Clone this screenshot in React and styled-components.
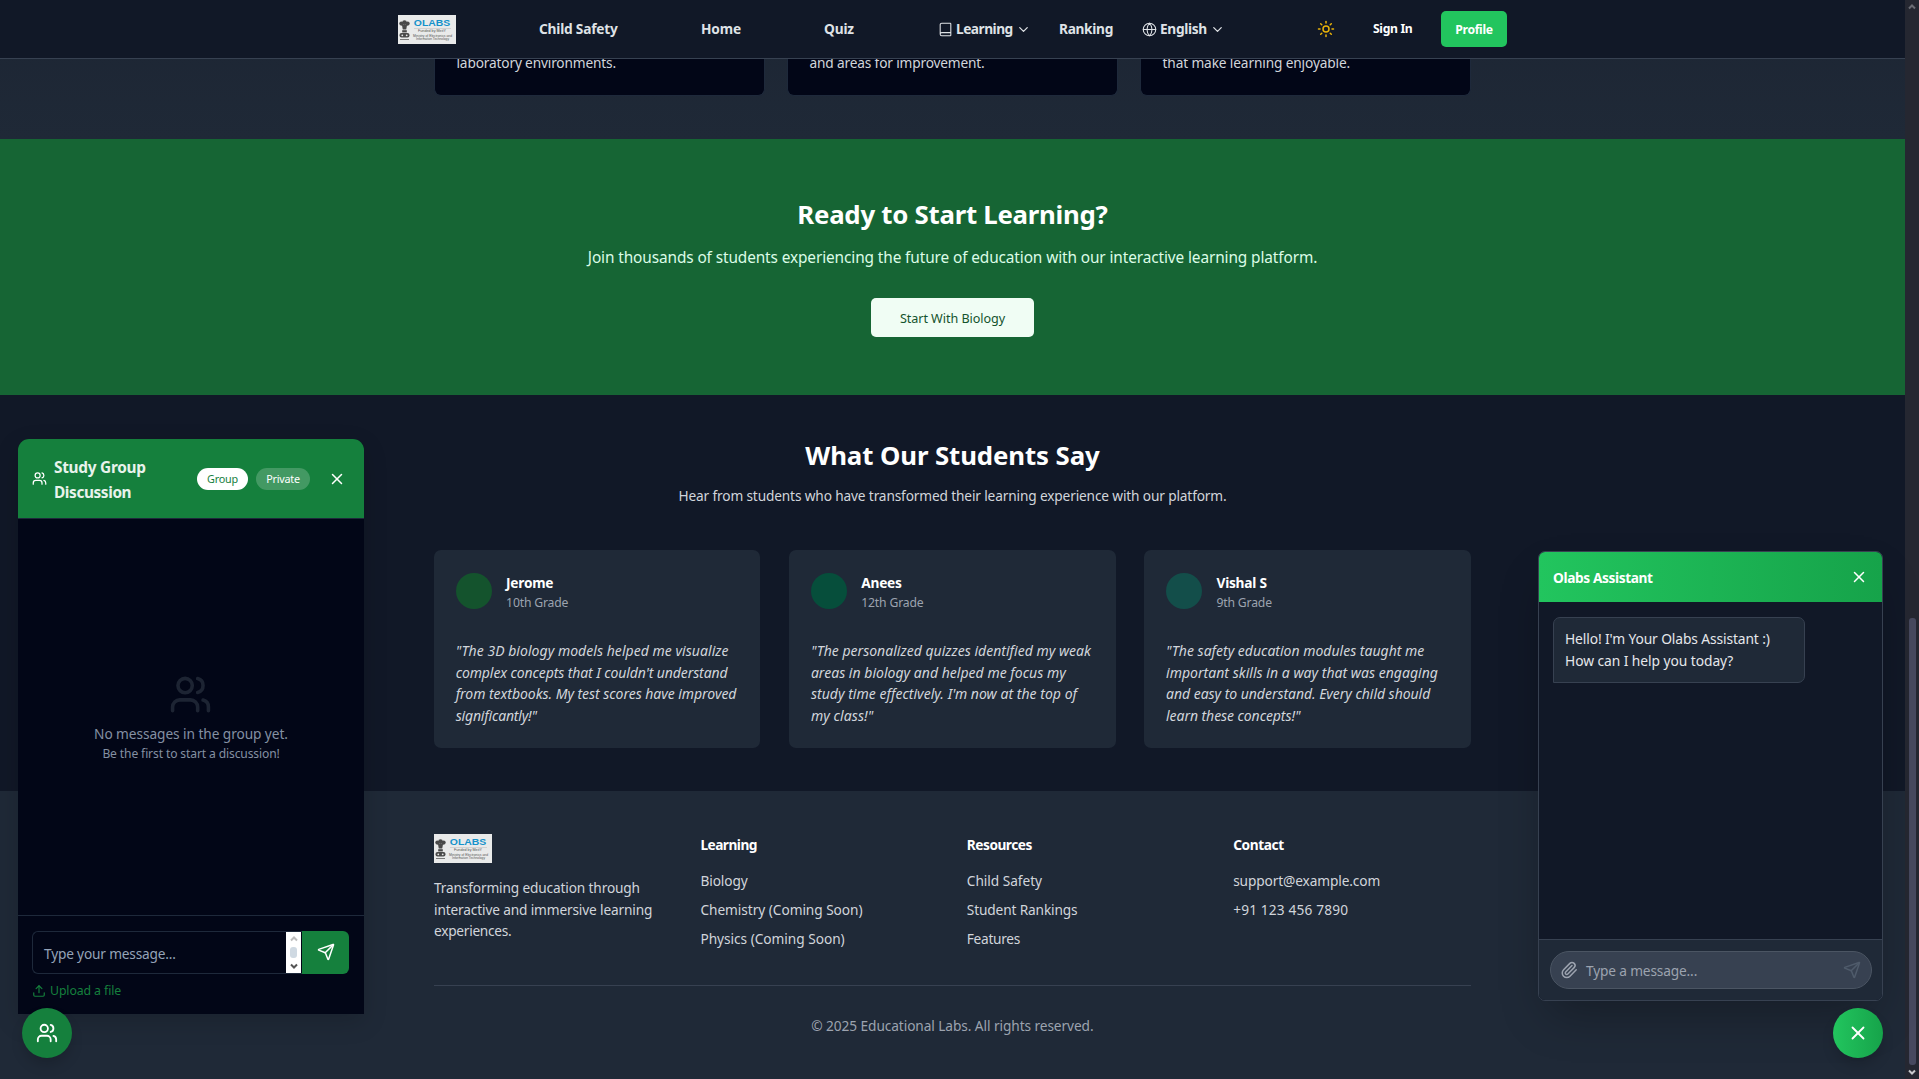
import React from "react";
import styled, { createGlobalStyle } from "styled-components";
import { Users, X, Send, Upload, Paperclip, Sun, Globe, ChevronDown } from "lucide-react";

const Global = createGlobalStyle`
  * { box-sizing: border-box; margin: 0; padding: 0; }
  html { font-size: 14.4px; }
  body { background: #111827; font-family: "Noto Sans", "Open Sans", sans-serif; overflow: hidden; }
  button { border: 0; font: inherit; color: inherit; background: none; }
`;

const Shell = styled.div`
  display: grid;
  grid-template-columns: 1fr 14px;
  height: 1079px;
  width: 1919px;
  position: relative;
  color: #d1d5db;
`;
const Page = styled.div`
  display: flex;
  flex-direction: column;
  overflow: hidden;
`;
const T = styled.span`
  display: block;
  white-space: nowrap;
  letter-spacing: ${(p) => p.$ls || 0}px;
`;

/* header */
const Header = styled.header`
  height: 59px;
  flex: none;
  position: relative;
  z-index: 1;
  background: #111827;
  border-bottom: 1px solid #374151;
  display: flex;
  align-items: center;
  padding-left: 398px;
`;
const NavItem = styled.div`
  width: ${(p) => p.$w}px;
  flex: none;
  display: flex;
  align-items: center;
  gap: 3px;
  font-size: ${(p) => p.$size || 13.7}px;
  line-height: 20px;
  font-weight: 700;
  color: ${(p) => p.$color || "#dfe2e6"};
`;
const ProfileButton = styled.button`
  width: 66px;
  height: 36px;
  border-radius: 5px;
  background: #22c55e;
  color: #fff;
  font-size: 12.2px;
  font-weight: 700;
  display: flex;
  align-items: center;
  justify-content: center;
`;

/* features */
const Features = styled.section`
  height: 110px;
  margin-top: -30px;
  flex: none;
  background: linear-gradient(#1d2634, #1f2937);
  display: flex;
  justify-content: center;
  gap: 22px;
`;
const FeatureCard = styled.div`
  width: 331px;
  height: 67px;
  border: 1px solid #1e293b;
  border-top: 0;
  border-radius: 0 0 7px 7px;
  background: #020617;
  padding: 23px 21.500px 0;
  font-size: 13.7px;
  line-height: 21.6px;
`;

/* call to action */
const Cta = styled.section`
  height: 256px;
  flex: none;
  background: #166534;
  display: flex;
  flex-direction: column;
  align-items: center;
  padding-top: 57px;
`;
const Heading = styled.h2`
  font-size: 25.800px;
  line-height: 36px;
  font-weight: 700;
  color: #fff;
`;
const Lead = styled.p`
  margin-top: ${(p) => p.$mt}px;
  font-size: ${(p) => p.$size}px;
  line-height: 24px;
  color: ${(p) => p.$color};
`;
const CtaButton = styled.button`
  margin-top: 28px;
  width: 163px;
  height: 39px;
  padding-top: 1px;
  border-radius: 5px;
  background: #f0fdf4;
  color: #14532d;
  font-size: 12.6px;
  display: flex;
  align-items: center;
  justify-content: center;
`;

/* testimonials */
const Stories = styled.section`
  height: 396px;
  flex: none;
  background: #111827;
  display: flex;
  flex-direction: column;
  align-items: center;
  padding-top: 42px;
`;
const Cards = styled.div`
  margin-top: 42px;
  width: 1036.8px;
  display: grid;
  grid-template-columns: repeat(3, minmax(0, 1fr));
  gap: 28.8px;
`;
const Card = styled.article`
  height: 198px;
  background: #1f2937;
  border-radius: 7px;
  padding: 22px 21.600px;
`;
const Person = styled.div`
  display: flex;
  align-items: center;
  gap: 14.4px;
  height: 38px;
`;
const Avatar = styled.div`
  width: 36px;
  height: 36px;
  border-radius: 50%;
  background: ${(p) => p.$color};
`;
const Name = styled.div`
  padding-top: 2px;
  font-size: 13.7px;
  line-height: 21px;
  font-weight: 700;
  color: #fff;
`;
const Grade = styled.div`
  font-size: 12.2px;
  line-height: 20px;
  color: #9ca3af;
`;
const Quote = styled.div`
  margin-top: 30px;
  font-size: 14px;
  line-height: 21.6px;
  font-style: italic;
`;

/* footer */
const Footer = styled.footer`
  flex: 1;
  background: #1f2937;
  padding: 43px 0 0 434px;
`;
const Columns = styled.div`
  width: 1036.8px;
  height: 152px;
  display: grid;
  grid-template-columns: repeat(4, minmax(0, 1fr));
  gap: 28.8px;
  border-bottom: 1px solid #374151;
`;
const FooterHead = styled.h3`
  font-size: 13.7px;
  line-height: 22px;
  font-weight: 700;
  color: #fff;
  margin-bottom: 14px;
`;
const FooterLink = styled.a`
  display: block;
  font-size: 13.7px;
  line-height: 22px;
  margin-bottom: 7px;
`;
const Blurb = styled.div`
  margin-top: 14px;
  font-size: 13.7px;
  line-height: 21.6px;
`;
const Copyright = styled.div`
  width: 1036.8px;
  margin-top: 29px;
  display: flex;
  justify-content: center;
  font-size: 13.7px;
  line-height: 22px;
  color: #9ca3af;
`;

/* scrollbar */
const Track = styled.div`
  background: #252731;
  display: flex;
  flex-direction: column;
  align-items: center;
`;
const Arrow = styled.svg`
  width: 8px;
  height: 6px;
  flex: none;
  margin-top: ${(p) => p.$mt || 0}px;
`;
const Thumb = styled.div`
  width: 7px;
  height: 447px;
  margin: 608px 0 4px;
  border-radius: 3px;
  background: #47495f;
`;

/* study group window */
const GroupPanel = styled.aside`
  position: absolute;
  left: 18px;
  top: 439px;
  width: 346px;
  height: 575px;
  border-radius: 11px 11px 0 0;
  background: #020617;
  box-shadow: 0 8px 24px rgba(0, 0, 0, 0.15);
  display: flex;
  flex-direction: column;
  overflow: hidden;
`;
const GroupHeader = styled.div`
  height: 80px;
  flex: none;
  background: #15803d;
  border-bottom: 1px solid #1e293b;
  color: #fff;
  display: flex;
  align-items: center;
  padding: 0 18px 0 14px;
`;
const GroupTitle = styled.div`
  width: 143px;
  margin-left: 7px;
  padding-top: 3px;
  font-size: 15.4px;
  line-height: 25px;
  font-weight: 700;
  color: #e8f3ec;
`;
const Pill = styled.button`
  width: ${(p) => p.$w}px;
  height: 22px;
  margin-right: 8px;
  border-radius: 11px;
  background: ${(p) => (p.$active ? "#fff" : "rgba(255,255,255,0.2)")};
  color: ${(p) => (p.$active ? "#15803d" : "#fff")};
  font-size: 10.8px;
  display: flex;
  justify-content: center;
  align-items: center;
`;
const Spacer = styled.div`
  flex: 1;
`;
const GroupBody = styled.div`
  flex: 1;
  display: flex;
  flex-direction: column;
  align-items: center;
  padding: 154px 0 0 0;
  color: #8490a3;
  svg { margin-right: 1px; }
`;
const EmptyTitle = styled.div`
  margin-top: 7px;
  font-size: 13.7px;
  line-height: 22px;
`;
const EmptyNote = styled.div`
  margin-top: 1px;
  font-size: 12.1px;
  line-height: 16px;
`;
const GroupFooter = styled.div`
  height: 99px;
  flex: none;
  border-top: 1px solid #1e293b;
  padding: 15px 15px 0 14px;
`;
const MessageRow = styled.div`
  display: flex;
  height: 43px;
`;
const MessageBox = styled.div`
  flex: 1;
  border: 1px solid #1e293b;
  border-right: 0;
  border-radius: 6px 0 0 6px;
  display: flex;
  justify-content: space-between;
  font-size: 13.7px;
  line-height: 43px;
  color: #94a3b8;
  padding-left: 11px;
`;
const MiniScroll = styled.div`
  width: 15px;
  margin-right: 1px;
  background: #fff;
  display: flex;
  flex-direction: column;
  align-items: center;
  justify-content: space-between;
  padding: 4px 0;
`;
const MiniThumb = styled.div`
  width: 7px;
  height: 11px;
  border-radius: 3px;
  background: #cfd9e2;
`;
const SendButton = styled.button`
  width: 47px;
  background: #15803d;
  border-radius: 0 6px 6px 0;
  padding-bottom: 1px;
  color: #fff;
  display: flex;
  align-items: center;
  justify-content: center;
`;
const UploadLink = styled.div`
  margin-top: 7px;
  display: flex;
  align-items: center;
  gap: 4px;
  font-size: 12.3px;
  line-height: 20px;
  color: #15803d;
`;

/* assistant window */
const BotPanel = styled.aside`
  position: absolute;
  left: 1538px;
  top: 551px;
  width: 345px;
  height: 450px;
  border: 1px solid #374151;
  border-radius: 7px;
  background: #111827;
  box-shadow: 0 22px 45px -11px rgba(0, 0, 0, 0.3);
  display: flex;
  flex-direction: column;
  overflow: hidden;
`;
const BotHeader = styled.div`
  height: 50px;
  flex: none;
  display: flex;
  align-items: center;
  justify-content: space-between;
  padding: 0 14px;
  background: linear-gradient(to right, #22c55e, #16a34a);
  color: #fff;
  font-size: 13.7px;
  font-weight: 700;
`;
const BotBody = styled.div`
  flex: 1;
  padding: 15px 14px;
`;
const Bubble = styled.div`
  width: 252px;
  height: 66px;
  border: 1px solid #374151;
  border-radius: 7px 7px 7px 0;
  background: #1f2937;
  color: #e5e7eb;
  padding: 10px 11px;
  font-size: 13.8px;
  line-height: 21.6px;
`;
const BotFooter = styled.div`
  height: 61px;
  flex: none;
  border-top: 1px solid #374151;
  background: #1f2937;
  padding: 11px 10px 0 11px;
`;
const BotInput = styled.div`
  height: 38px;
  border: 1px solid #4b5563;
  border-radius: 19px;
  background: #374151;
  display: flex;
  align-items: center;
  padding: 0 10px 0 9px;
  color: #9ca3af;
  font-size: 13.7px;
  ${T} { margin-left: 8px; flex: 1; }
`;
const Fab = styled.button`
  position: absolute;
  left: ${(p) => p.$left}px;
  top: 1008px;
  width: 50px;
  height: 50px;
  border-radius: 50%;
  background: ${(p) => p.$bg};
  color: #fff;
  display: flex;
  align-items: center;
  justify-content: center;
  box-shadow: 0 8px 14px -2px rgba(0, 0, 0, 0.18);
`;

/* logo */
const LogoBox = styled.div`
  width: 58px;
  height: 29px;
  flex: none;
  margin-right: ${(p) => p.$mr || 0}px;
  svg { display: block; }
`;
const Logo = ({ mr }) => (
  <LogoBox $mr={mr}>
    <svg width="58" height="29" viewBox="0 0 58 29" fontFamily="Liberation Sans, sans-serif">
      <rect width="58" height="29" fill="#e9eaea" />
      <g fill="#4a4a4a">
        <circle cx="6.5" cy="7.600" r="2.300" />
        <circle cx="3.400" cy="8.600" r="2.100" />
        <circle cx="9.600" cy="8.600" r="2.100" />
        <path d="M3.800 9.500h5.400l-1 5h-3.400z" />
        <rect x="4.200" y="15.200" width="4.600" height="2.200" />
        <rect x="1.500" y="18" width="10" height="4.600" rx="2" />
        <rect x="2" y="24" width="9" height="1" opacity=".7" />
      </g>
      <circle cx="4.300" cy="20.300" r="0.900" fill="#e9eaea" />
      <circle cx="8.700" cy="20.300" r="0.900" fill="#e9eaea" />
      <text x="15.800" y="11.200" fontSize="8.400" fontWeight="700" fill="#1592cb" textLength="36.500" lengthAdjust="spacingAndGlyphs">OLABS</text>
      <rect x="16" y="13" width="37" height="0.500" fill="#bbb" />
      <g fill="#555" fontSize="3.500">
        <text x="20" y="17.400" textLength="28" lengthAdjust="spacingAndGlyphs">Funded by MeitY</text>
        <text x="15" y="21.800" textLength="39" lengthAdjust="spacingAndGlyphs">Ministry of Electronics and</text>
        <text x="18" y="25.400" textLength="33" lengthAdjust="spacingAndGlyphs">Information Technology</text>
      </g>
    </svg>
  </LogoBox>
);

const BookIcon = () => (
  <svg width="15" height="15" viewBox="0 0 24 24" fill="none" stroke="currentColor" strokeWidth="1.700" strokeLinecap="round" strokeLinejoin="round">
    <path d="M3.500 19V4.500A2.500 2.500 0 0 1 6 2H19.500a1 1 0 0 1 1 1v18a1 1 0 0 1-1 1H6a2.500 2.500 0 0 1 0-5H20.500" />
  </svg>
);

const Lines = ({ items }) => items.map(([text, ls]) => <T key={text} $ls={ls}>{text}</T>);

const features = [["laboratory environments.", -0.16], ["and areas for improvement.", -0.16], ["that make learning enjoyable.", -0.13]];
const people = [
  {
    name: "Jerome", grade: "10th Grade", color: "#14532d",
    quote: [
      ["\"The 3D biology models helped me visualize", 0.04],
      ["complex concepts that I couldn't understand", -0.1],
      ["from textbooks. My test scores have improved", -0.04],
      ["significantly!\"", -0.18],
    ],
  },
  {
    name: "Anees", grade: "12th Grade", color: "#064e3b",
    quote: [
      ["\"The personalized quizzes identified my weak", 0.01],
      ["areas in biology and helped me focus my", 0.02],
      ["study time effectively. I'm now at the top of", 0.03],
      ["my class!\"", 0.1],
    ],
  },
  {
    name: "Vishal S", grade: "9th Grade", color: "#134e4a",
    quote: [
      ["\"The safety education modules taught me", 0],
      ["important skills in a way that was engaging", 0.02],
      ["and easy to understand. Every child should", -0.04],
      ["learn these concepts!\"", -0.07],
    ],
  },
];
const columns = [
  [["Learning", -0.52], [["Biology", -0.09], ["Chemistry (Coming Soon)", -0.05], ["Physics (Coming Soon)", -0.03]]],
  [["Resources", -0.48], [["Child Safety", -0.04], ["Student Rankings", -0.14], ["Features", -0.3]]],
  [["Contact", -0.4], [["support@example.com", -0.12], ["+91 123 456 7890", 0.16]]],
];

export default function App() {
  return (
    <Shell>
      <Global />
      <Page>
        <Header>
          <Logo mr={83} />
          <NavItem $w={162}><T $ls={-0.2}>Child Safety</T></NavItem>
          <NavItem $w={123}><T $ls={-0.15}>Home</T></NavItem>
          <NavItem $w={114}><T $ls={-0.15}>Quiz</T></NavItem>
          <NavItem $w={121}><BookIcon /><T $ls={-0.5}>Learning</T><ChevronDown size={15} /></NavItem>
          <NavItem $w={83}><T $ls={-0.32}>Ranking</T></NavItem>
          <NavItem $w={175}><Globe size={15} strokeWidth={1.7} /><T $ls={-0.34}>English</T><ChevronDown size={15} /></NavItem>
          <NavItem $w={56} $color="#eab308"><Sun size={18} /></NavItem>
          <NavItem $w={68} $size={12.2} $color="#fff"><T $ls={-0.35}>Sign In</T></NavItem>
          <ProfileButton><T $ls={-0.3}>Profile</T></ProfileButton>
        </Header>
        <Features>
          {features.map(([f, ls]) => <FeatureCard key={f}><T $ls={ls}>{f}</T></FeatureCard>)}
        </Features>
        <Cta>
          <Heading><T $ls={-0.26}>Ready to Start Learning?</T></Heading>
          <Lead $mt={14} $size={15.4} $color="#dcfce7"><T $ls={-0.11}>Join thousands of students experiencing the future of education with our interactive learning platform.</T></Lead>
          <CtaButton><T $ls={-0.06}>Start With Biology</T></CtaButton>
        </Cta>
        <Stories>
          <Heading><T $ls={-0.1}>What Our Students Say</T></Heading>
          <Lead $mt={11} $size={13.7} $color="#d1d5db"><T $ls={-0.147}>Hear from students who have transformed their learning experience with our platform.</T></Lead>
          <Cards>
            {people.map((p) => (
              <Card key={p.name}>
                <Person>
                  <Avatar $color={p.color} />
                  <div>
                    <Name><T $ls={-0.24}>{p.name}</T></Name>
                    <Grade><T $ls={-0.17}>{p.grade}</T></Grade>
                  </div>
                </Person>
                <Quote><Lines items={p.quote} /></Quote>
              </Card>
            ))}
          </Cards>
        </Stories>
        <Footer>
          <Columns>
            <div>
              <Logo />
              <Blurb>
                <Lines items={[["Transforming education through", -0.15], ["interactive and immersive learning", -0.15], ["experiences.", -0.27]]} />
              </Blurb>
            </div>
            {columns.map(([[head, ls], links]) => (
              <div key={head}>
                <FooterHead><T $ls={ls}>{head}</T></FooterHead>
                {links.map(([l, s]) => <FooterLink key={l}><T $ls={s}>{l}</T></FooterLink>)}
              </div>
            ))}
          </Columns>
          <Copyright><T $ls={-0.08}>© 2025 Educational Labs. All rights reserved.</T></Copyright>
        </Footer>
      </Page>
      <Track>
        <Arrow $mt={4} viewBox="0 0 8 6"><path d="M1 4.500 4 1.500 7 4.500" fill="none" stroke="#6b6c74" strokeWidth="2" /></Arrow>
        <Thumb />
        <Arrow viewBox="0 0 8 6"><path d="M1 1.500 4 4.500 7 1.500" fill="none" stroke="#c8c8cc" strokeWidth="2" /></Arrow>
      </Track>

      <GroupPanel>
        <GroupHeader>
          <Users size={15} />
          <GroupTitle><T $ls={-0.27}>Study Group</T><T $ls={-0.4}>Discussion</T></GroupTitle>
          <Pill $w={51} $active><T $ls={-0.2}>Group</T></Pill>
          <Pill $w={54}><T $ls={-0.25}>Private</T></Pill>
          <Spacer />
          <X size={18} />
        </GroupHeader>
        <GroupBody>
          <Users size={43} color="#1d2433" />
          <EmptyTitle><T $ls={-0.07}>No messages in the group yet.</T></EmptyTitle>
          <EmptyNote><T $ls={-0.13}>Be the first to start a discussion!</T></EmptyNote>
        </GroupBody>
        <GroupFooter>
          <MessageRow>
            <MessageBox>
              <T $ls={-0.18}>Type your message...</T>
              <MiniScroll>
                <svg width="8" height="6" viewBox="0 0 8 6"><path d="M1 4.500 4 1.500 7 4.500" fill="none" stroke="#bcbcbc" strokeWidth="2" /></svg>
                <MiniThumb />
                <svg width="8" height="6" viewBox="0 0 8 6"><path d="M1 1.500 4 4.500 7 1.500" fill="none" stroke="#555" strokeWidth="2" /></svg>
              </MiniScroll>
            </MessageBox>
            <SendButton><Send size={18} /></SendButton>
          </MessageRow>
          <UploadLink><Upload size={14} /><T $ls={-0.1}>Upload a file</T></UploadLink>
        </GroupFooter>
      </GroupPanel>
      <Fab $left={22} $bg="#15803d"><Users size={22} /></Fab>

      <BotPanel>
        <BotHeader><T $ls={-0.38}>Olabs Assistant</T><X size={18} /></BotHeader>
        <BotBody>
          <Bubble>
            <Lines items={[["Hello! I'm Your Olabs Assistant :)", -0.11], ["How can I help you today?", -0.06]]} />
          </Bubble>
        </BotBody>
        <BotFooter>
          <BotInput><Paperclip size={18} /><T $ls={-0.15}>Type a message...</T><Send size={18} color="#4f5b6b" /></BotInput>
        </BotFooter>
      </BotPanel>
      <Fab $left={1833} $bg="linear-gradient(to right, #22c55e, #16a34a)"><X size={22} /></Fab>
    </Shell>
  );
}
